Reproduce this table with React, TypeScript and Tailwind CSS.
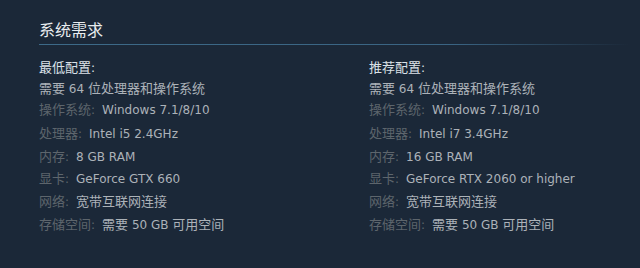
import type { FC } from 'react';

type Req = { label: string; value: string };

const MIN: Req[] = [
  { label: '操作系统', value: 'Windows 7.1/8/10' },
  { label: '处理器', value: 'Intel i5 2.4GHz' },
  { label: '内存', value: '8 GB RAM' },
  { label: '显卡', value: 'GeForce GTX 660' },
  { label: '网络', value: '宽带互联网连接' },
  { label: '存储空间', value: '需要 50 GB 可用空间' },
];

const REC: Req[] = [
  { label: '操作系统', value: 'Windows 7.1/8/10' },
  { label: '处理器', value: 'Intel i7 3.4GHz' },
  { label: '内存', value: '16 GB RAM' },
  { label: '显卡', value: 'GeForce RTX 2060 or higher' },
  { label: '网络', value: '宽带互联网连接' },
  { label: '存储空间', value: '需要 50 GB 可用空间' },
];

// gaps between rows, measured off the screenshot
const GAPS = ['mt-[3px]', 'mt-[6px]', 'mt-[5px]', 'mt-[4px]', 'mt-[5px]', 'mt-[5px]'];

// the CJK glyphs in the shot run a touch wider than the latin ones
const Mixed: FC<{ text: string }> = ({ text }) => (
  <>
    {text.split(/([\u4e00-\u9fff]+)/).map((part, i) =>
      /[\u4e00-\u9fff]/.test(part) ? (
        <span key={i} className="text-[13px]">
          {part}
        </span>
      ) : (
        part
      ),
    )}
  </>
);

const Column: FC<{ title: string; items: Req[]; className?: string }> = ({
  title,
  items,
  className = '',
}) => (
  <div className={className}>
    <p className="leading-[18px] text-[#dbe2e8]">
      <Mixed text={title} />
    </p>
    <p className="mt-[3px] leading-[18px] text-[#acb2b8]">
      <Mixed text="需要 64 位处理器和操作系统" />
    </p>
    {items.map((it, i) => (
      <p key={it.label} className={`${GAPS[i]} leading-[18px] whitespace-nowrap`}>
        <span className="text-[#5d656c]">
          <Mixed text={it.label} />:
        </span>
        <span className="ml-[7px] text-[#acb2b8]">
          <Mixed text={it.value} />
        </span>
      </p>
    ))}
  </div>
);

export default function App() {
  return (
    <div
      className="h-[268px] w-[640px] bg-[#1b2838] pl-[39px] pr-[10px] pt-[21px] text-[12px]"
      style={{ fontFamily: '"DejaVu Sans", "Noto Sans CJK SC", sans-serif' }}
    >
      <h2 className="text-[16px] leading-[20px] text-[#e8ecef]">系统需求</h2>
      <div className="mt-[3px] h-px bg-gradient-to-r from-[#3d6a88] via-[#3a6483] via-70% to-transparent" />
      <div className="mt-[14px] flex">
        <Column title="最低配置:" items={MIN} className="w-[330px]" />
        <Column title="推荐配置:" items={REC} className="flex-1" />
      </div>
    </div>
  );
}
